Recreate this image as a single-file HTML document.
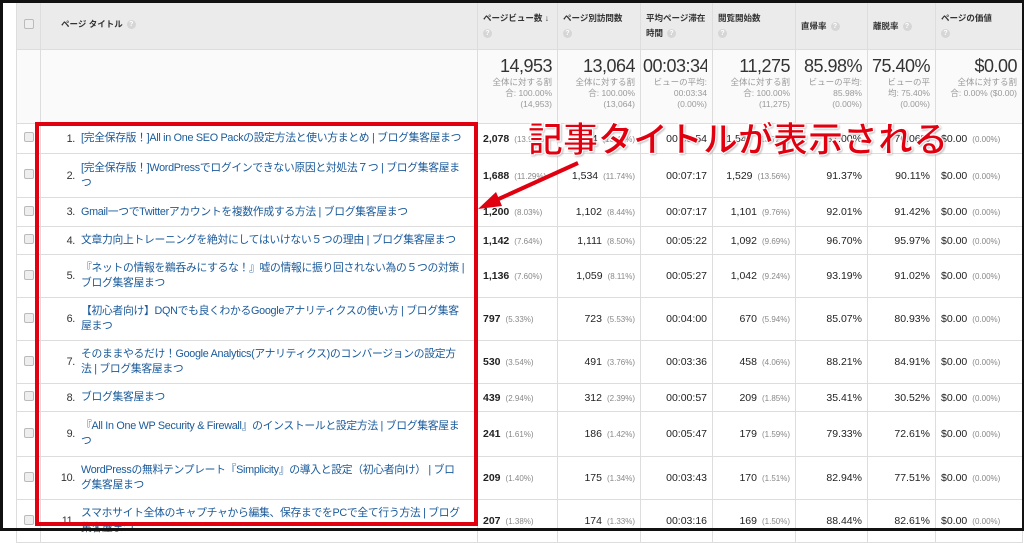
<!DOCTYPE html>
<html><head><meta charset="utf-8"><style>
*{box-sizing:border-box;margin:0;padding:0}
body{width:1024px;height:531px;overflow:hidden;background:#fff;font-family:"Liberation Sans","Noto Sans CJK JP",sans-serif;position:relative;font-size:11px;color:#222}
.frame{position:absolute;inset:0;border:3px solid #111;border-right-width:2px;z-index:20;pointer-events:none}
table{position:absolute;left:16px;top:2px;border-collapse:collapse;table-layout:fixed;width:1006px}
td,th{border:1px solid #ddd;vertical-align:middle;padding:0 5px;overflow:hidden}
th{background:#ebebeb;font-weight:bold;font-size:8.5px;color:#333;text-align:left;vertical-align:top;padding-top:8px;line-height:15px;white-space:nowrap}
th div{height:30px;overflow:hidden}
.q{display:inline-block;width:9px;height:9px;border-radius:50%;background:#d6d6d6;color:#fff;font-size:7px;text-align:center;line-height:9px;vertical-align:middle;margin-left:4px}
.tot td{background:#fafafa;text-align:right;vertical-align:top;padding:5px 5px 0 2px;color:#999;font-size:8.5px;line-height:11px}
.tot td div{height:66px;overflow:hidden;padding-left:10px}
.tot b{display:block;font-weight:normal;font-size:18px;color:#333;line-height:22px;white-space:nowrap;letter-spacing:-0.5px;margin-left:-10px}
.cb{display:inline-block;width:10px;height:10px;border:1px solid #bbb;background:#eee;border-radius:2px}
td.c{text-align:center;padding:0}
td.t{color:#1a5a9a;font-size:10.8px;line-height:15px;padding-left:40px;padding-right:2px;position:relative;letter-spacing:-0.3px}
td.t i{position:absolute;left:12px;font-style:normal;color:#333;width:22px;text-align:right;top:50%;margin-top:-7px}
td.n{text-align:right;font-size:10.5px;white-space:nowrap}
td.n s{text-decoration:none;color:#888;font-size:8px;margin-left:5px}
td.l{text-align:left}
td.l b{font-weight:bold}
</style></head><body>
<div class="frame"></div>
<table>
<colgroup><col style="width:24px"><col style="width:437px"><col style="width:80px"><col style="width:83px"><col style="width:72px"><col style="width:83px"><col style="width:72px"><col style="width:68px"><col style="width:87px"></colgroup>
<tr style="height:46px"><th style="text-align:center;padding-top:16px"><div><span class="cb"></span></div></th><th style="padding-left:20px;padding-top:14px"><div>ページ タイトル<span class="q">?</span></div></th><th><div>ページビュー数 ↓<br><span class="q" style="margin:0">?</span></div></th><th><div>ページ別訪問数<br><span class="q" style="margin:0">?</span></div></th><th style="white-space:normal"><div>平均ページ滞在時間<span class="q">?</span></div></th><th><div>閲覧開始数<br><span class="q" style="margin:0">?</span></div></th><th style="padding-top:16px"><div>直帰率<span class="q">?</span></div></th><th style="padding-top:16px"><div>離脱率<span class="q">?</span></div></th><th><div>ページの価値<br><span class="q" style="margin:0">?</span></div></th></tr>
<tr class="tot" style="height:74px"><td></td><td></td><td><div><b>14,953</b>全体に対する割合: 100.00% (14,953)</div></td><td><div><b>13,064</b>全体に対する割合: 100.00% (13,064)</div></td><td><div><b>00:03:34</b>ビューの平均: 00:03:34 (0.00%)</div></td><td><div><b>11,275</b>全体に対する割合: 100.00% (11,275)</div></td><td><div><b>85.98%</b>ビューの平均: 85.98% (0.00%)</div></td><td><div><b>75.40%</b>ビューの平均: 75.40% (0.00%)</div></td><td><div><b>$0.00</b>全体に対する割合: 0.00% ($0.00)</div></td></tr>
<tr style="height:30px"><td class="c"><span class="cb"></span></td><td class="t" style="white-space:nowrap"><i>1.</i>[完全保存版！]All in One SEO Packの設定方法と使い方まとめ | ブログ集客屋まつ</td><td class="n l"><b>2,078</b><s>(13.90%)</s></td><td class="n">1,754<s>(13.43%)</s></td><td class="n">00:03:54</td><td class="n">1,547<s>(13.72%)</s></td><td class="n">87.00%</td><td class="n">76.06%</td><td class="n l">$0.00<s>(0.00%)</s></td></tr>
<tr style="height:44px"><td class="c"><span class="cb"></span></td><td class="t"><i>2.</i>[完全保存版！]WordPressでログインできない原因と対処法７つ | ブログ集客屋ま<br>つ</td><td class="n l"><b>1,688</b><s>(11.29%)</s></td><td class="n">1,534<s>(11.74%)</s></td><td class="n">00:07:17</td><td class="n">1,529<s>(13.56%)</s></td><td class="n">91.37%</td><td class="n">90.11%</td><td class="n l">$0.00<s>(0.00%)</s></td></tr>
<tr style="height:29px"><td class="c"><span class="cb"></span></td><td class="t"><i>3.</i>Gmail一つでTwitterアカウントを複数作成する方法 | ブログ集客屋まつ</td><td class="n l"><b>1,200</b><s>(8.03%)</s></td><td class="n">1,102<s>(8.44%)</s></td><td class="n">00:07:17</td><td class="n">1,101<s>(9.76%)</s></td><td class="n">92.01%</td><td class="n">91.42%</td><td class="n l">$0.00<s>(0.00%)</s></td></tr>
<tr style="height:28px"><td class="c"><span class="cb"></span></td><td class="t" style="white-space:nowrap"><i>4.</i>文章力向上トレーニングを絶対にしてはいけない５つの理由 | ブログ集客屋まつ</td><td class="n l"><b>1,142</b><s>(7.64%)</s></td><td class="n">1,111<s>(8.50%)</s></td><td class="n">00:05:22</td><td class="n">1,092<s>(9.69%)</s></td><td class="n">96.70%</td><td class="n">95.97%</td><td class="n l">$0.00<s>(0.00%)</s></td></tr>
<tr style="height:43px"><td class="c"><span class="cb"></span></td><td class="t"><i>5.</i>『ネットの情報を鵜呑みにするな！』嘘の情報に振り回されない為の５つの対策 |<br>ブログ集客屋まつ</td><td class="n l"><b>1,136</b><s>(7.60%)</s></td><td class="n">1,059<s>(8.11%)</s></td><td class="n">00:05:27</td><td class="n">1,042<s>(9.24%)</s></td><td class="n">93.19%</td><td class="n">91.02%</td><td class="n l">$0.00<s>(0.00%)</s></td></tr>
<tr style="height:43px"><td class="c"><span class="cb"></span></td><td class="t"><i>6.</i>【初心者向け】DQNでも良くわかるGoogleアナリティクスの使い方 | ブログ集客<br>屋まつ</td><td class="n l"><b>797</b><s>(5.33%)</s></td><td class="n">723<s>(5.53%)</s></td><td class="n">00:04:00</td><td class="n">670<s>(5.94%)</s></td><td class="n">85.07%</td><td class="n">80.93%</td><td class="n l">$0.00<s>(0.00%)</s></td></tr>
<tr style="height:43px"><td class="c"><span class="cb"></span></td><td class="t"><i>7.</i>そのままやるだけ！Google Analytics(アナリティクス)のコンバージョンの設定方<br>法 | ブログ集客屋まつ</td><td class="n l"><b>530</b><s>(3.54%)</s></td><td class="n">491<s>(3.76%)</s></td><td class="n">00:03:36</td><td class="n">458<s>(4.06%)</s></td><td class="n">88.21%</td><td class="n">84.91%</td><td class="n l">$0.00<s>(0.00%)</s></td></tr>
<tr style="height:28px"><td class="c"><span class="cb"></span></td><td class="t"><i>8.</i>ブログ集客屋まつ</td><td class="n l"><b>439</b><s>(2.94%)</s></td><td class="n">312<s>(2.39%)</s></td><td class="n">00:00:57</td><td class="n">209<s>(1.85%)</s></td><td class="n">35.41%</td><td class="n">30.52%</td><td class="n l">$0.00<s>(0.00%)</s></td></tr>
<tr style="height:45px"><td class="c"><span class="cb"></span></td><td class="t"><i>9.</i>『All In One WP Security &amp; Firewall』のインストールと設定方法 | ブログ集客屋ま<br>つ</td><td class="n l"><b>241</b><s>(1.61%)</s></td><td class="n">186<s>(1.42%)</s></td><td class="n">00:05:47</td><td class="n">179<s>(1.59%)</s></td><td class="n">79.33%</td><td class="n">72.61%</td><td class="n l">$0.00<s>(0.00%)</s></td></tr>
<tr style="height:43px"><td class="c"><span class="cb"></span></td><td class="t"><i>10.</i>WordPressの無料テンプレート『Simplicity』の導入と設定（初心者向け） | ブロ<br>グ集客屋まつ</td><td class="n l"><b>209</b><s>(1.40%)</s></td><td class="n">175<s>(1.34%)</s></td><td class="n">00:03:43</td><td class="n">170<s>(1.51%)</s></td><td class="n">82.94%</td><td class="n">77.51%</td><td class="n l">$0.00<s>(0.00%)</s></td></tr>
<tr style="height:43px"><td class="c"><span class="cb"></span></td><td class="t"><i>11.</i>スマホサイト全体のキャプチャから編集、保存までをPCで全て行う方法 | ブログ<br>集客屋まつ</td><td class="n l"><b>207</b><s>(1.38%)</s></td><td class="n">174<s>(1.33%)</s></td><td class="n">00:03:16</td><td class="n">169<s>(1.50%)</s></td><td class="n">88.44%</td><td class="n">82.61%</td><td class="n l">$0.00<s>(0.00%)</s></td></tr>
</table>
<div style="position:absolute;left:35px;top:122px;width:443px;height:404px;border:4px solid #e0000f;z-index:10"></div>
<svg style="position:absolute;left:0;top:0;z-index:11" width="1024" height="531"><line x1="578" y1="163" x2="492" y2="202" stroke="#e0000f" stroke-width="4"/><polygon points="478,209 496,192 502,206" fill="#e0000f"/></svg>
<div style="position:absolute;left:528px;top:112px;z-index:12;font-size:35px;font-weight:bold;color:#e0000f;white-space:nowrap;-webkit-text-stroke:1px #fff;text-shadow:0 0 2px #fff,0 0 2px #fff,1px 1px 2px #888">記事タイトルが表示される</div>
</body></html>
